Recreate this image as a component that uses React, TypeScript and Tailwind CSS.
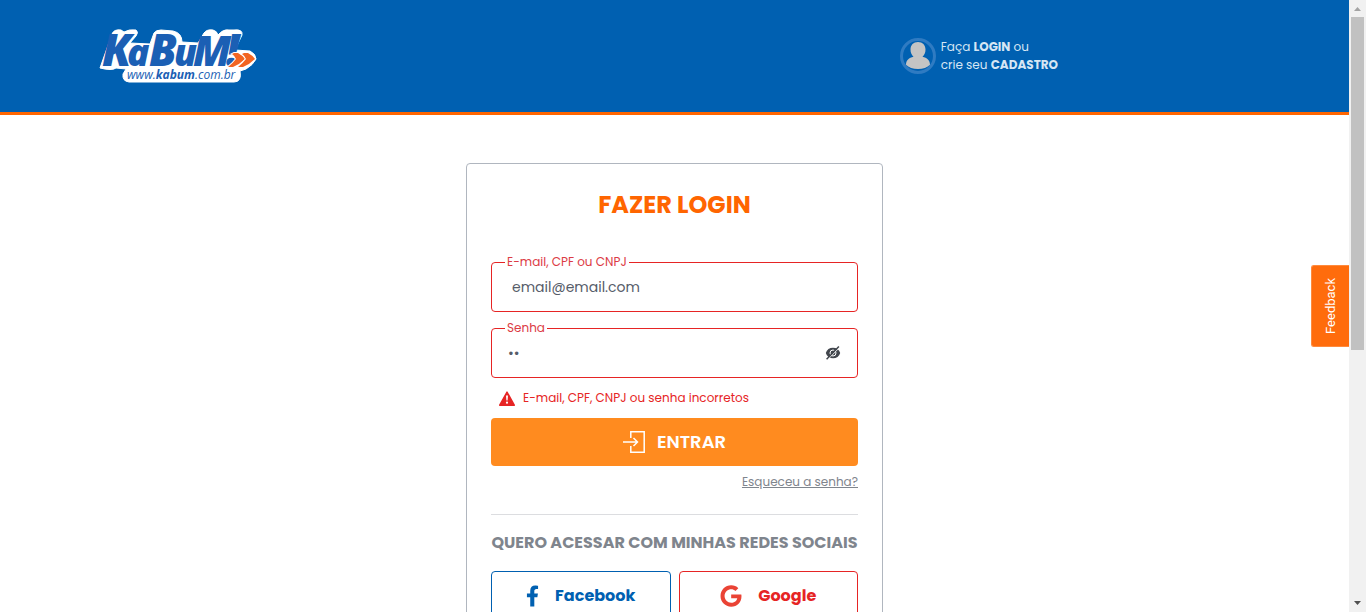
import { useState } from "react";
import type { ReactNode } from "react";
import { FaFacebookF, FaGoogle } from "react-icons/fa";

function Logo() {
  return (
    <svg viewBox="0 0 160 58" className="h-[58px] w-[160px]" role="img" aria-label="KaBuM! www.kabum.com.br">
      <path
        d="M2 41L14 7Q16 2 23 3L26 5Q31 2 38 3Q41 5 38 9L32 16L52 17L56 6Q58 3 63 3L75 4Q84 6 84 15L100 16L106 6Q109 2 115 3Q119 4 120 8Q125 2 131 3L136 3Q145 2 144 8L137 23L152 24Q158 27 158 32Q155 38 148 42L142 44Q144 55 136 55L31 55Q24 54 25 47L28 42L18 41Q14 44 2 41z"
        fill="#fff"
        stroke="#fff"
        strokeWidth="1"
        strokeLinejoin="round"
      />
      <g fill="#1b5fb4" fontFamily="'Open Sans', sans-serif" fontStyle="italic" fontWeight="800">
        <text x="4" y="39" fontSize="44">K</text>
        <text x="29" y="39" fontSize="37">a</text>
        <text x="51" y="39" fontSize="44">B</text>
        <text x="76" y="39" fontSize="37">u</text>
        <text x="95" y="39" fontSize="42">M</text>
        <text x="128" y="39" fontSize="44">!</text>
      </g>
      <g fill="#f26522" stroke="#fff" strokeWidth="2" paintOrder="stroke">
        <path d="M136 26h4q4 2 7 6q-5 5-12 8h-5q5-4 8-8q-1-3-4-5z" />
        <path d="M146 26h4q4 2 7 6q-5 5-12 8h-5q5-4 8-8q-1-3-4-5z" />
      </g>
      <text x="29" y="52" fontFamily="'Open Sans', sans-serif" fontSize="12" fontStyle="italic" fill="#1b5fb4">
        www.<tspan fontWeight="700">kabum</tspan>.com.br
      </text>
    </svg>
  );
}

function UserIcon() {
  return (
    <svg viewBox="0 0 36 36" className="size-9" aria-hidden="true">
      <circle cx="18" cy="18" r="16.5" fill="none" stroke="#2f7bc2" strokeWidth="3" />
      <path
        d="M18 4c4.500 0 7.500 3 7.500 7.500 0 3-1 5.500-3 7.200 4.500.8 7.500 3.600 7.500 8.100-2.500 2.800-7 4.200-12 4.200s-9.500-1.400-12-4.200c0-4.500 3-7.300 7.500-8.100-2-1.700-3-4.200-3-7.200C10.500 7 13.500 4 18 4z"
        fill="#c4c4c4"
      />
    </svg>
  );
}

function HiddenEyeIcon() {
  return (
    <svg viewBox="0 0 16 14" className="h-[14px] w-4" aria-hidden="true">
      <path d="M.8 7C1.800 3.500 4.500 1.800 8 1.800S14.200 3.500 15.200 7c-1 3.500-3.700 5.200-7.200 5.200S1.800 10.500.8 7z" fill="#42464d" />
      <circle cx="8" cy="7" r="3" fill="none" stroke="#fff" strokeWidth="1" />
      <path d="M2.600 13.700L14.600 1.500" stroke="#fff" strokeWidth="1" />
      <path d="M1.600 13.200L13.900.6" stroke="#42464d" strokeWidth="1.500" />
    </svg>
  );
}

function WarningIcon() {
  return (
    <svg viewBox="0 0 16 15" className="h-[15px] w-4" aria-hidden="true">
      <path d="M8 1L15.300 14.200H.7z" fill="#e62424" stroke="#e62424" strokeWidth="1.400" strokeLinejoin="round" />
      <path d="M7 4.500h2l-.4 5H7.400z" fill="#fff" />
      <circle cx="8" cy="11.700" r="1.100" fill="#fff" />
    </svg>
  );
}

function EnterIcon() {
  return (
    <svg viewBox="0 0 22 22" className="size-[22px]" fill="none" stroke="#fff" strokeWidth="1.500" aria-hidden="true">
      <path d="M7.800 7V.8h13.400v20.400H7.800V15M0 11h14M10.500 7l4 4-4 4" />
    </svg>
  );
}

function Field({ id, label, children }: { id: string; label: string; children: ReactNode }) {
  return (
    <fieldset className="min-w-0 rounded border border-[#e62424] px-[13px]">
      <legend className="px-[2px] text-xs leading-[18px] text-[#dc3b45]">
        <label htmlFor={id}>{label}</label>
      </legend>
      <div className="flex h-10 items-start">{children}</div>
    </fieldset>
  );
}

function Scrollbar() {
  return (
    <div className="flex w-[17px] shrink-0 flex-col items-center bg-[#f1f1f1]" aria-hidden="true">
      <svg viewBox="0 0 17 17" className="size-[17px]">
        <path d="M5 11h7L8.500 7z" fill="#a3a3a3" />
      </svg>
      <div className="h-[333px] w-[13px] bg-[#c1c1c1]" />
      <svg viewBox="0 0 17 17" className="mt-auto size-[17px]">
        <path d="M5 6h7l-3.500 4z" fill="#505050" />
      </svg>
    </div>
  );
}

export default function App() {
  const [visible, setVisible] = useState(false);

  return (
    <div className="flex h-screen overflow-hidden bg-white font-[Poppins,Inter,sans-serif]">
      <div className="relative min-w-0 flex-1 overflow-hidden">
        <header className="flex h-[115px] items-center justify-between border-b-[3px] border-[#ff6500] bg-[#0060b1] pr-[291px] pl-[98px]">
          <a href="#inicio">
            <Logo />
          </a>
          <div className="flex items-center gap-[5px] text-[#d6e6f4]">
            <UserIcon />
            <p className="text-xs leading-[18px]">
              Faça <a href="#login" className="font-bold">LOGIN</a> ou
              <br />
              crie seu <a href="#cadastro" className="font-bold">CADASTRO</a>
            </p>
          </div>
        </header>

        <main className="flex justify-center pt-12">
          <section className="w-[417px] rounded border border-[#b0b6bf] px-6 pt-[23px] pb-6">
            <h1 className="text-center text-2xl leading-9 font-bold text-[#ff6500]">FAZER LOGIN</h1>
            <form className="mt-[30px]" onSubmit={(e) => e.preventDefault()}>
              <div className="flex flex-col gap-[7px]">
                <Field id="login" label="E-mail, CPF ou CNPJ">
                  <input
                    id="login"
                    type="text"
                    defaultValue="email@email.com"
                    className="h-8 w-full px-[7px] text-sm text-[#565c69] outline-none"
                  />
                </Field>
                <Field id="senha" label="Senha">
                  <input
                    id="senha"
                    type={visible ? "text" : "password"}
                    defaultValue="ab"
                    className="h-8 min-w-0 flex-1 px-[3px] text-sm text-[#565c69] outline-none"
                  />
                  <button
                    type="button"
                    aria-label="Mostrar senha"
                    onClick={() => setVisible(!visible)}
                    className="flex h-8 w-[22px] items-center justify-center"
                  >
                    <HiddenEyeIcon />
                  </button>
                </Field>
              </div>
              <p className="flex h-10 items-center gap-2 pl-2 text-xs text-[#e62424]">
                <WarningIcon />
                E-mail, CPF, CNPJ ou senha incorretos
              </p>
              <button
                type="submit"
                className="flex h-12 w-full items-center justify-center gap-3 rounded bg-[#ff8b1f] text-lg leading-6 font-semibold text-white"
              >
                <EnterIcon />
                ENTRAR
              </button>
              <div className="flex h-[49px] justify-end border-b border-[#dcdde0] pt-[7px]">
                <a href="#senha" className="text-xs leading-[18px] text-[#7f858d] underline">
                  Esqueceu a senha?
                </a>
              </div>
            </form>
            <h2 className="mt-4 text-center text-base leading-6 font-bold whitespace-nowrap text-[#7f858d]">
              QUERO ACESSAR COM MINHAS REDES SOCIAIS
            </h2>
            <div className="mt-4 grid grid-cols-2 gap-2">
              <button
                type="button"
                className="flex h-[50px] items-center justify-center gap-4 rounded border border-[#0060b1] text-base font-bold text-[#0060b1]"
              >
                <FaFacebookF className="h-[22px] w-[13px]" />
                Facebook
              </button>
              <button
                type="button"
                className="flex h-[50px] items-center justify-center gap-4 rounded border border-[#e62424] text-base font-bold text-[#e62424]"
              >
                <FaGoogle className="size-[22px] text-[#ea4335]" />
                Google
              </button>
            </div>
          </section>
        </main>

        <button
          type="button"
          className="absolute top-[265px] right-0 flex h-[82px] w-[38px] items-center justify-center rounded-l-[3px] border border-r-0 border-[#ff8a3d] bg-[#ff6c0c] font-[Roboto,sans-serif] text-[13px] text-white"
        >
          <span className="rotate-180 [writing-mode:vertical-rl]">Feedback</span>
        </button>
      </div>
      <Scrollbar />
    </div>
  );
}
